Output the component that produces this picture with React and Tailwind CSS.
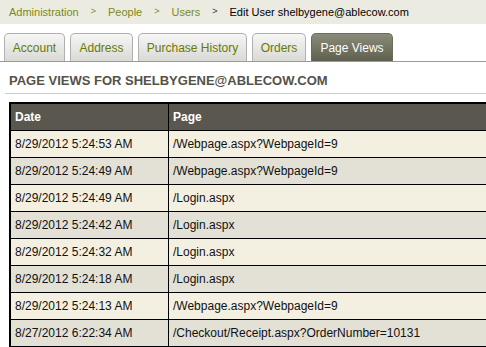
const tabs = [
  { label: 'Account', w: 'w-[61px]' },
  { label: 'Address', w: 'w-[63px]' },
  { label: 'Purchase History', w: 'w-[109px]' },
  { label: 'Orders', w: 'w-[54px]' },
  { label: 'Page Views', w: 'w-[82px]', active: true },
]

const rows = [
  ['8/29/2012 5:24:53 AM', '/Webpage.aspx?WebpageId=9'],
  ['8/29/2012 5:24:49 AM', '/Webpage.aspx?WebpageId=9'],
  ['8/29/2012 5:24:49 AM', '/Login.aspx'],
  ['8/29/2012 5:24:42 AM', '/Login.aspx'],
  ['8/29/2012 5:24:32 AM', '/Login.aspx'],
  ['8/29/2012 5:24:18 AM', '/Login.aspx'],
  ['8/29/2012 5:24:13 AM', '/Webpage.aspx?WebpageId=9'],
  ['8/27/2012 6:22:34 AM', '/Checkout/Receipt.aspx?OrderNumber=10131'],
]

export default function App() {
  return (
    <div className="w-[486px] h-[347px] overflow-hidden bg-white font-['Liberation_Sans',Arial,sans-serif]">
      {/* Breadcrumb */}
      <div className="h-[24px] bg-[#ecebe1] flex items-center pl-[9px] text-[11px]">
        <span className="text-[#7a8a1a]">Administration</span>
        <span className="text-[#7a8a1a] mx-[12px] text-[9px]">&gt;</span>
        <span className="text-[#7a8a1a]">People</span>
        <span className="text-[#7a8a1a] mx-[12px] text-[9px]">&gt;</span>
        <span className="text-[#7a8a1a]">Users</span>
        <span className="text-[#333] mx-[12px] text-[9px]">&gt;</span>
        <span className="text-black">Edit User shelbygene@ablecow.com</span>
      </div>

      {/* Tabs */}
      <div className="mt-[9px] flex items-end gap-[5px] pl-[4px] border-b border-[#9a9a9a] h-[29px]">
        {tabs.map((t) => (
          <div
            key={t.label}
            className={
              t.active
                ? `${t.w} h-[28px] flex items-center justify-center rounded-t-[5px] border border-b-0 border-[#6a6b5a] bg-gradient-to-b from-[#8a8b78] to-[#5f604f] text-white text-[12px]`
                : `${t.w} h-[28px] flex items-center justify-center rounded-t-[5px] border border-b-0 border-[#b0b0b0] bg-gradient-to-b from-[#f6f6f4] to-[#d9d9d6] text-[#6a7a00] text-[12px]`
            }
          >
            {t.label}
          </div>
        ))}
      </div>

      {/* Heading */}
      <div className="ml-[5px] mt-[6px] pl-[4px] h-[26px] flex items-center border-b border-[#cfcfcf] font-bold text-[13px] text-[#55524a] uppercase">
        Page Views for shelbygene@ablecow.com
      </div>

      {/* Table */}
      <div className="ml-[9px] mt-[8px] w-[520px] border-l-2 border-t-2 border-black text-[12px]">
        <div className="flex h-[27px] bg-[#5a574e] text-white font-bold border-b border-black">
          <div className="w-[158px] pl-[4px] flex items-center border-r border-black">Date</div>
          <div className="flex-1 pl-[4px] flex items-center">Page</div>
        </div>
        {rows.map((r, i) => (
          <div
            key={i}
            className={`flex h-[27px] border-b border-black text-[#111] ${i % 2 === 0 ? 'bg-[#f3f0e1]' : 'bg-[#e3e0d6]'}`}
          >
            <div className="w-[158px] pl-[4px] flex items-center border-r border-black">{r[0]}</div>
            <div className="flex-1 pl-[4px] flex items-center">{r[1]}</div>
          </div>
        ))}
      </div>
    </div>
  )
}
